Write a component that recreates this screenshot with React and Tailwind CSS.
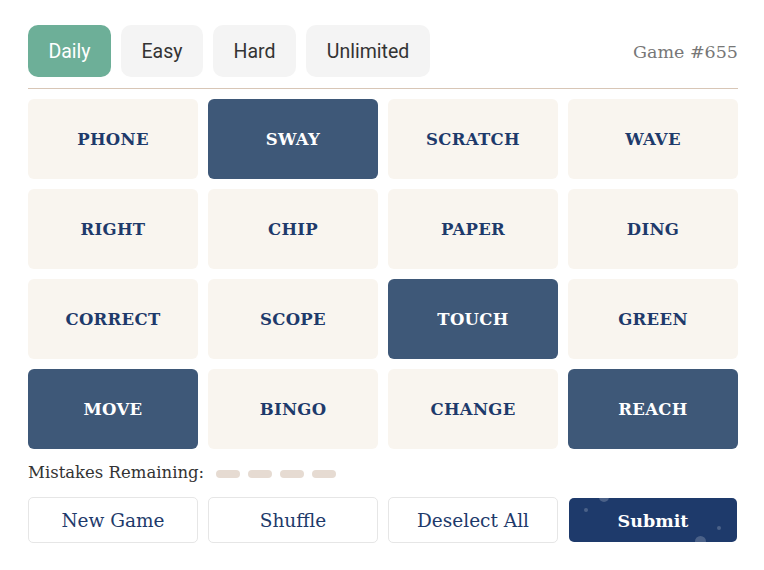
const tabs = ['Daily', 'Easy', 'Hard', 'Unlimited'];

const words = [
  ['PHONE', false], ['SWAY', true], ['SCRATCH', false], ['WAVE', false],
  ['RIGHT', false], ['CHIP', false], ['PAPER', false], ['DING', false],
  ['CORRECT', false], ['SCOPE', false], ['TOUCH', true], ['GREEN', false],
  ['MOVE', true], ['BINGO', false], ['CHANGE', false], ['REACH', true],
];

const serif = { fontFamily: '"DejaVu Serif", "Liberation Serif", serif' };

export default function App() {
  return (
    <div className="w-[764px] h-[570px] bg-white pl-[28px] pt-[25px]">
      <div className="w-[710px]">
        {/* Mode tabs */}
        <div className="flex items-center gap-[10px] pb-[11px] border-b border-[#d8c6b6]">
          {tabs.map((t, i) => (
            <button
              key={t}
              className={`h-[52px] pt-[2px] rounded-[10px] text-[19.5px] font-['Roboto',sans-serif] ${i === 0 ? 'bg-[#6daf98] text-white w-[83px]' : 'bg-[#f4f4f4] text-[#333]'} ${i === 1 ? 'w-[82px]' : ''} ${i === 2 ? 'w-[83px]' : ''} ${i === 3 ? 'w-[124px]' : ''}`}
            >
              {t}
            </button>
          ))}
          <div className="ml-auto pt-[2px] text-[17.5px] text-[#777]" style={serif}>Game #655</div>
        </div>

        {/* Word grid */}
        <div className="grid grid-cols-4 gap-[10px] mt-[10px]">
          {words.map(([w, sel]) => (
            <div
              key={w}
              className={`h-[80px] pt-[3px] rounded-[6px] flex items-center justify-center text-[16.5px] font-bold tracking-[0.3px] ${sel ? 'bg-[#3e5878] text-white' : 'bg-[#f9f5ef] text-[#1e3a6b]'}`}
              style={serif}
            >
              {w}
            </div>
          ))}
        </div>

        {/* Mistakes */}
        <div className="flex items-center mt-[12px] h-[24px]">
          <span className="text-[16.5px] text-[#333]" style={serif}>Mistakes Remaining:</span>
          <div className="flex gap-[8px] ml-[12px] mt-[1px]">
            {[0, 1, 2, 3].map((d) => (
              <span key={d} className="w-[24px] h-[8px] rounded-full bg-[#e6dbd2]" />
            ))}
          </div>
        </div>

        {/* Actions */}
        <div className="grid grid-cols-4 gap-[10px] mt-[12px]">
          {['New Game', 'Shuffle', 'Deselect All'].map((b) => (
            <button
              key={b}
              className="h-[46px] pt-[2px] rounded-[5px] border border-[#e6e6e6] bg-white text-[18.5px] text-[#1e3a6b]"
              style={serif}
            >
              {b}
            </button>
          ))}
          <button
            className="relative overflow-hidden h-[44px] mt-[1px] mx-[1px] pt-[2px] rounded-[5px] bg-[#1e3a6b] text-white text-[17.5px] font-bold"
            style={serif}
          >
            <span className="absolute left-[30px] top-[-6px] w-[10px] h-[10px] rounded-full bg-white/20" />
            <span className="absolute left-[15px] top-[10px] w-[4px] h-[4px] rounded-full bg-white/20" />
            <span className="absolute left-[126px] top-[38px] w-[11px] h-[11px] rounded-full bg-white/20" />
            <span className="absolute left-[148px] top-[28px] w-[4px] h-[4px] rounded-full bg-white/20" />
            <span className="relative">Submit</span>
          </button>
        </div>
      </div>
    </div>
  );
}
